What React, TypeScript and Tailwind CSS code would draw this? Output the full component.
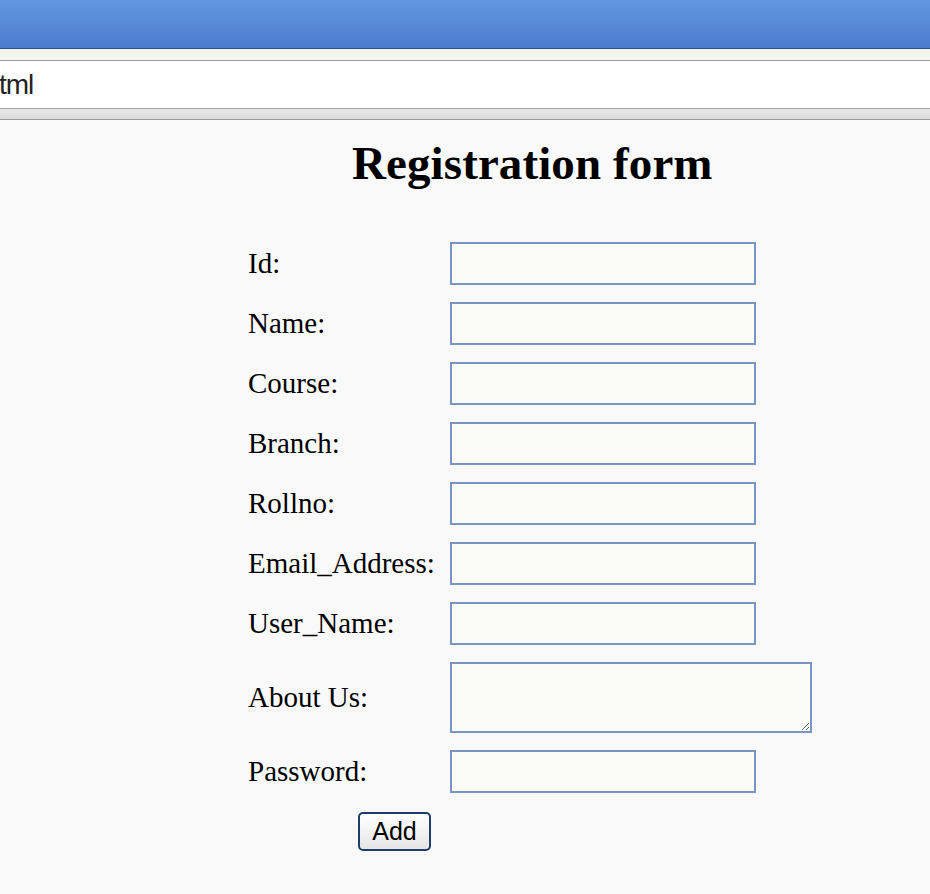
import React from "react";

const serif = { fontFamily: '"Liberation Serif", "Times New Roman", serif' };

function Row({ label, children, h = 43 }: { label: string; children: React.ReactNode; h?: number }) {
  return (
    <div className="flex items-center" style={{ height: h }}>
      <div className="w-[202px] text-[29px] leading-[33px] text-black" style={serif}>
        {label}
      </div>
      {children}
    </div>
  );
}

function Field() {
  return (
    <input
      type="text"
      className="h-[43px] w-[306px] border-2 border-[#7b94c4] bg-[#fbfbf7] outline-none"
    />
  );
}

export default function App() {
  return (
    <div className="w-[930px] h-[894px] overflow-hidden bg-[#f9f9f9]">
      <div className="h-[48px] bg-gradient-to-b from-[#6398e0] to-[#4a7bcc]" />
      <div className="h-[1px] bg-[#2a4f8c]" />
      <div className="h-[11px] bg-[#f6f6f0]" />
      <div className="h-[1px] bg-[#9a9a9a]" />
      <div className="h-[47px] bg-white flex items-center">
        <span
          className="text-[28px] leading-none text-[#222] -ml-[1px] tracking-[-1px]"
          style={{ fontFamily: '"Liberation Sans", Arial, sans-serif' }}
        >
          tml
        </span>
      </div>
      <div className="h-[1px] bg-[#a0a0a0]" />
      <div className="h-[10px] bg-gradient-to-b from-[#e9e9e9] to-[#dcdcdc]" />
      <div className="h-[1px] bg-[#9a9a9a]" />

      <div className="pt-[20px]">
        <h1 className="pl-[352px] text-[47px] leading-[47px] font-bold text-black tracking-[0.1px]" style={serif}>
          Registration form
        </h1>
        <form className="pl-[248px] pt-[55px] flex flex-col gap-[17px]">
          <Row label="Id:">
            <Field />
          </Row>
          <Row label="Name:">
            <Field />
          </Row>
          <Row label="Course:">
            <Field />
          </Row>
          <Row label="Branch:">
            <Field />
          </Row>
          <Row label="Rollno:">
            <Field />
          </Row>
          <Row label="Email_Address:">
            <Field />
          </Row>
          <Row label="User_Name:">
            <Field />
          </Row>
          <Row label="About Us:" h={71}>
            <textarea className="block h-[71px] w-[362px] border-2 border-[#7b94c4] bg-[#fbfbf7] outline-none resize" />
          </Row>
          <Row label="Password:">
            <input
              type="password"
              className="h-[43px] w-[306px] border-2 border-[#7b94c4] bg-[#fbfbf7] outline-none"
            />
          </Row>
          <div className="pl-[110px] pt-[2px]">
            <button
              type="button"
              className="h-[39px] w-[73px] rounded-[5px] border-2 border-[#1e3c6c] bg-gradient-to-b from-white to-[#e6e6e6] text-[25px] leading-none text-black"
              style={{ fontFamily: '"Liberation Sans", Arial, sans-serif' }}
            >
              Add
            </button>
          </div>
        </form>
      </div>
    </div>
  );
}
